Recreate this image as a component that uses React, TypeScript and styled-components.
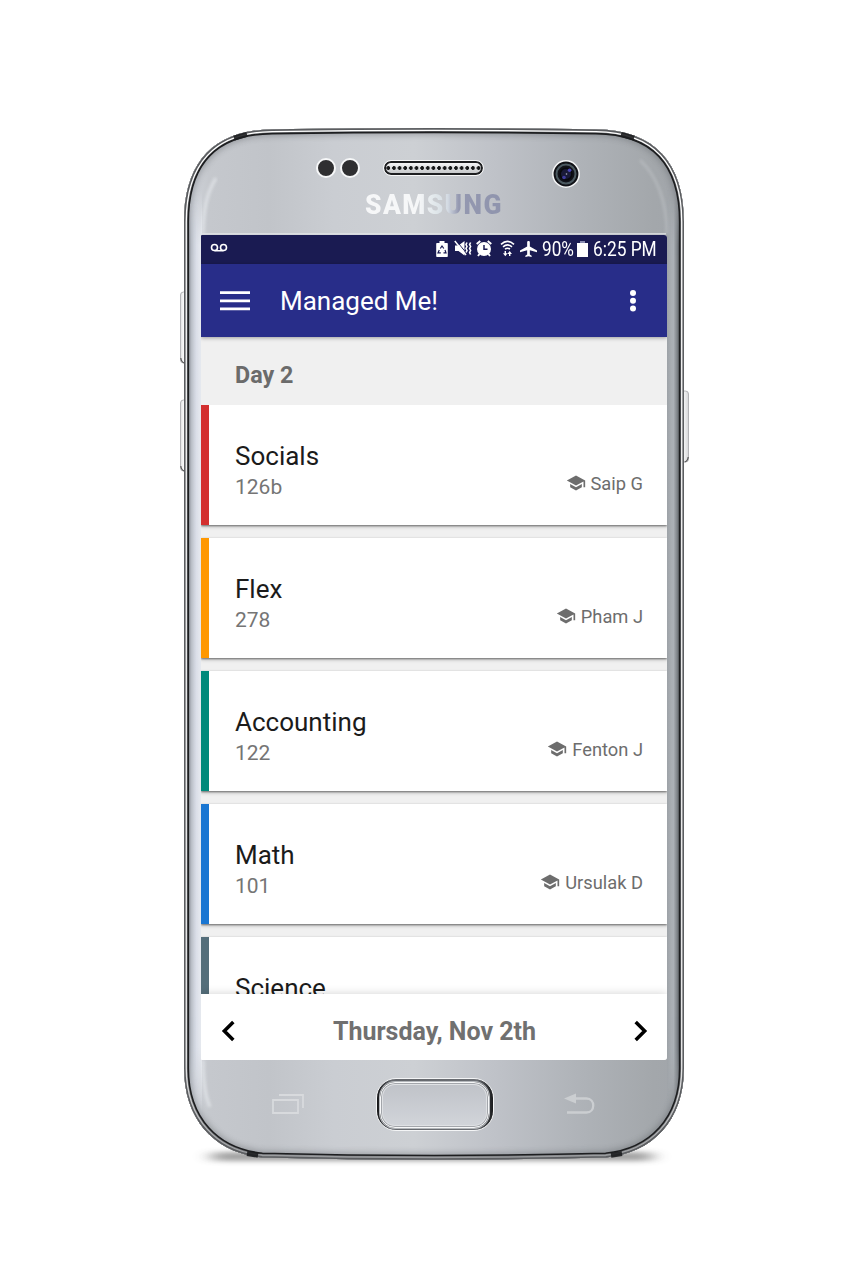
import React from "react";
import styled, { createGlobalStyle } from "styled-components";

const GlobalStyle = createGlobalStyle`
  * { box-sizing: border-box; }
  body { margin: 0; background: #fff; font-family: Roboto, "Liberation Sans", sans-serif; }
`;

const Page = styled.main`
  width: 863px;
  height: 1280px;
  padding: 128px 0 0 184px;
  overflow: hidden;
  background: #fff;
`;

const Phone = styled.div`
  position: relative;
  width: 500px;
  height: 1033px;
  display: flex;
  flex-direction: column;
`;

const ShellArt = styled.svg`
  position: absolute;
  left: -14px;
  top: -8px;
  z-index: 0;
`;

const TopBezel = styled.header`
  position: relative;
  height: 107px;
  padding-top: 30px;
  display: flex;
  flex-direction: column;
`;

const SensorRow = styled.div`
  height: 32px;
  display: flex;
  align-items: flex-start;
  padding-left: 132px;
`;

const Sensor = styled.i`
  width: 20px;
  height: 20px;
  margin: 0 4px 0 0;
  border-radius: 50%;
  border: 2px solid #f6f7f8;
  background: #2f2f31;
`;

const Speaker = styled.div`
  width: 99px;
  height: 14px;
  margin: 3px 0 0 20px;
  border-radius: 8px;
  border: 2px solid #1d1e20;
  outline: 1px solid rgba(255, 255, 255, 0.85);
  background:
    radial-gradient(circle at 3px 5px, #151617 1.6px, transparent 2.1px) 5px 0 / 5.65px 12px repeat-x,
    linear-gradient(#f4f4f5, #c6c8ca);
`;

const Camera = styled.svg`
  margin-left: 68px;
  margin-top: 1px;
`;

const Brand = styled.div`
  width: max-content;
  margin: 0 0 0 181px;
  font-size: 28.5px;
  line-height: 29px;
  font-weight: 900;
  letter-spacing: 1.5px;
  white-space: nowrap;
  transform: scaleX(0.925);
  transform-origin: left;
  color: transparent;
  background: linear-gradient(90deg, #f6f7f8 0 38%, #dfe6ea 52%, #d4dbe3 60%, #9498b0 68%, #8f94ad 100%);
  background-clip: text;
  -webkit-background-clip: text;
`;

const Screen = styled.section`
  position: relative;
  width: 466px;
  height: 825px;
  margin-left: 17px;
  display: flex;
  flex-direction: column;
  background: #f0f0f0;
  overflow: hidden;
  border-radius: 1px 3px 3px 1px;
`;

const StatusBar = styled.div`
  height: 29px;
  flex: none;
  display: flex;
  align-items: center;
  padding: 0 11px 0 9px;
  background: #1a1b52;
  color: #fff;
`;

const StatusIcons = styled.div`
  margin-left: auto;
  display: flex;
  align-items: center;
`;

const StatusText = styled.span<{ $w: number; $scale: number }>`
  width: ${(p) => p.$w}px;
  font-size: 20px;
  line-height: 28px;
  padding-bottom: 1px;
  white-space: nowrap;
  transform: scaleX(${(p) => p.$scale});
  transform-origin: left;
`;

const Glyph = styled.svg<{ $gap?: number }>`
  flex: none;
  display: block;
  margin-right: ${(p) => p.$gap ?? 0}px;
  margin-bottom: 2px;
`;

const Voicemail = styled(Glyph)`
  margin-bottom: 3px;
`;

const AppBar = styled.div`
  position: relative;
  z-index: 1;
  height: 73px;
  flex: none;
  display: flex;
  align-items: center;
  padding: 0 27px 0 19px;
  background: #282d89;
  box-shadow: 0 1px 4px rgba(0, 0, 0, 0.35);
  color: #fff;
`;

const AppTitle = styled.h1`
  flex: 1;
  margin: 0 0 0 30px;
  font-size: 26px;
  line-height: 32px;
  font-weight: 400;
`;

const DayHeading = styled.h2`
  height: 68px;
  flex: none;
  margin: 0;
  padding: 5px 0 0 34px;
  font-size: 23.3px;
  line-height: 66px;
  font-weight: 700;
  color: #6b6b6b;
`;

const ClassList = styled.div`
  flex: 1;
  min-height: 0;
  overflow: hidden;
  display: flex;
  flex-direction: column;
  gap: 13px;
`;

const ClassCard = styled.article<{ $accent: string }>`
  height: 120px;
  flex: none;
  display: flex;
  justify-content: space-between;
  padding: 36px 24px 0 26px;
  background: #fff;
  border-left: 8px solid ${(p) => p.$accent};
  box-shadow: 0 1px 2px rgba(0, 0, 0, 0.5), 0 2px 4px rgba(0, 0, 0, 0.15);
`;

const Subject = styled.h3`
  margin: 0;
  font-size: 26px;
  line-height: 31px;
  font-weight: 400;
  color: #1b1b1b;
`;

const Room = styled.p`
  margin: 1px 0 0;
  font-size: 21px;
  line-height: 28px;
  color: #757575;
`;

const Teacher = styled.div`
  display: flex;
  align-items: center;
  gap: 5px;
  height: 24px;
  margin-top: 30px;
  font-size: 18.3px;
  color: #6d6d6d;
`;

const CapGlyph = styled.svg`
  flex: none;
`;

const DateBar = styled.nav`
  position: relative;
  height: 66px;
  flex: none;
  display: flex;
  align-items: center;
  justify-content: space-between;
  padding: 8px 18px 0 19px;
  background: #fff;
  box-shadow: 0 0 9px rgba(0, 0, 0, 0.18);
`;

const DateLabel = styled.strong`
  padding-top: 2px;
  font-size: 25px;
  line-height: 32px;
  font-weight: 700;
  color: #707070;
`;

const BottomBezel = styled.footer`
  position: relative;
  height: 100px;
  display: flex;
  align-items: flex-start;
  padding: 18px 88px 0 88px;
  justify-content: space-between;
`;

const NavKey = styled.svg`
  margin-top: 15px;
`;

const HomeButton = styled.div`
  width: 118px;
  height: 53px;
  padding: 2.5px 3.5px;
  border-radius: 20px;
  background: linear-gradient(90deg, #151618, #65686d 12%, #6b6e73 86%, #1b1c1e);
  border: 1.5px solid #f4f5f6;
`;

const HomeInner = styled.div`
  height: 100%;
  border-radius: 15px;
  border: 1.5px solid #f6f7f8;
  box-shadow: 0 0 0 1px #b4b7bb, inset 0 0 0 1px #a3a6ab, inset 0 0 0 2px #dfe1e4;
  background: linear-gradient(#bfc2c8, #d2d5da);
`;

const classes = [
  { subject: "Socials", room: "126b", teacher: "Saip G", accent: "#d32f2f" },
  { subject: "Flex", room: "278", teacher: "Pham J", accent: "#ff9800" },
  { subject: "Accounting", room: "122", teacher: "Fenton J", accent: "#00897b" },
  { subject: "Math", room: "101", teacher: "Ursulak D", accent: "#1976d2" },
  { subject: "Science", room: "", teacher: "", accent: "#546e7a" },
];

const outline =
  "M184 222C184 163 213 130 272 129.3Q434 126.8 596 129.3C655 130 684 163 684 222V1068C684 1121 652 1153 606 1157.5Q434 1162 262 1157.5C216 1153 184 1121 184 1068Z";

function Shell() {
  return (
    <ShellArt width="530" height="1060" viewBox="170 120 530 1060" aria-hidden="true">
      <defs>
        <linearGradient id="face" x1="184" x2="684" y1="0" y2="0" gradientUnits="userSpaceOnUse">
          <stop offset="0" stopColor="#d4d8df" />
          <stop offset=".05" stopColor="#c5c8cd" />
          <stop offset=".17" stopColor="#c1c4c9" />
          <stop offset=".3" stopColor="#cacdd2" />
          <stop offset=".46" stopColor="#cdd0d4" />
          <stop offset=".62" stopColor="#bfc2c8" />
          <stop offset=".8" stopColor="#aeb2b7" />
          <stop offset=".94" stopColor="#a3a7ab" />
          <stop offset="1" stopColor="#a1a5aa" />
        </linearGradient>
        <linearGradient id="left" x1="188" x2="202" y1="0" y2="0" gradientUnits="userSpaceOnUse">
          <stop offset="0" stopColor="#a9adb5" />
          <stop offset=".25" stopColor="#ccd1da" />
          <stop offset=".6" stopColor="#dce0e9" />
          <stop offset="1" stopColor="#e8ebf0" />
        </linearGradient>
        <linearGradient id="right" x1="667" x2="680" y1="0" y2="0" gradientUnits="userSpaceOnUse">
          <stop offset="0" stopColor="#9da2a7" />
          <stop offset=".5" stopColor="#b0b5ba" />
          <stop offset=".8" stopColor="#878c91" />
          <stop offset="1" stopColor="#45484c" />
        </linearGradient>
        <linearGradient id="key" x1="0" x2="1" y1="0" y2="0">
          <stop offset="0" stopColor="#dcdddf" />
          <stop offset=".35" stopColor="#fafafa" />
          <stop offset="1" stopColor="#d5d6d8" />
        </linearGradient>
        <linearGradient id="shine" x1="0" x2="0" y1="128" y2="1160" gradientUnits="userSpaceOnUse">
          <stop offset="0" stopColor="#fff" />
          <stop offset=".9" stopColor="#f0f0f0" />
          <stop offset="1" stopColor="#97999c" />
        </linearGradient>
        <filter id="soft" x="-10%" y="-10%" width="120%" height="120%">
          <feGaussianBlur stdDeviation="3" />
        </filter>
        <filter id="fine">
          <feGaussianBlur stdDeviation="1.8" />
        </filter>
        <filter id="ground" x="-10%" y="-200%" width="120%" height="500%">
          <feGaussianBlur stdDeviation="9 2.4" />
        </filter>
        <linearGradient id="fadeSides" x1="0" x2="0" y1="190" y2="1120" gradientUnits="userSpaceOnUse">
          <stop offset="0" stopColor="#fff" stopOpacity="0" />
          <stop offset=".06" stopColor="#fff" />
          <stop offset=".92" stopColor="#fff" />
          <stop offset="1" stopColor="#fff" stopOpacity="0" />
        </linearGradient>
        <mask id="sides" maskUnits="userSpaceOnUse" x="170" y="120" width="530" height="1060">
          <rect x="170" y="120" width="530" height="1060" fill="url(#fadeSides)" />
        </mask>
        <clipPath id="body">
          <path d={outline} />
        </clipPath>
      </defs>
      <rect x="212" y="1152" width="440" height="9" rx="4" fill="#444" opacity=".5" filter="url(#ground)" />
      <g fill="url(#key)" stroke="#a4a5a8" strokeWidth=".8">
        <rect x="180.5" y="292" width="8" height="71" rx="3" />
        <rect x="180.5" y="400" width="8" height="71" rx="3" />
        <rect x="680" y="391" width="8.5" height="71" rx="3" />
      </g>
      <path d="M180.8 358q.5 4 3.500 5M180.800 466q.5 4 3.500 5M688.200 457q-.5 4-3.500 5" fill="none" stroke="#555" strokeWidth="1.200" />
      <path d={outline} fill="url(#face)" />
      <g clipPath="url(#body)">
        <g mask="url(#sides)">
          <rect x="188" y="170" width="14" height="960" fill="url(#left)" />
          <rect x="667" y="170" width="14" height="960" fill="url(#right)" />
        </g>
        <path d={outline} fill="none" stroke="#54585d" strokeWidth="13" opacity=".42" filter="url(#soft)" />
        <path d="M203 234C203 210 207 192 216 178M203 1060C203 1082 205 1096 210 1107" fill="none" stroke="#e9ecf0" strokeWidth="3.500" opacity=".6" filter="url(#fine)" />
        <path d="M667 234C667 202 657 176 640 160" fill="none" stroke="#d0d4d7" strokeWidth="3" opacity=".35" filter="url(#fine)" />
        <path d={outline} fill="none" stroke="#1d1e20" strokeWidth="10.200" />
        <path d={outline} fill="none" stroke="#77797c" strokeWidth="7" />
        <path d={outline} fill="none" stroke="url(#shine)" strokeWidth="5.800" />
        <path d={outline} fill="none" stroke="#5b5d60" strokeWidth="3.200" />
      </g>
      <path d="M234 138.200L247 134.300M621 134.300L634 138.200M247 1153.500L258 1155.200M611 1155.200L622 1153.500" stroke="#1c1d1f" strokeWidth="5" fill="none" opacity=".9" />
      <path d="M202 233.800H666" stroke="#e2e4e7" strokeWidth="1.300" />
    </ShellArt>
  );
}

function CapIcon() {
  return (
    <CapGlyph width="20" height="20" viewBox="0 0 24 24" fill="#6d6d6d">
      <path d="M5 13.18v4L12 21l7-3.82v-4L12 17l-7-3.82zM12 3L1 9l11 6 9-4.91V17h2V9L12 3z" />
    </CapGlyph>
  );
}

export default function App() {
  return (
    <Page>
      <GlobalStyle />
      <Phone>
        <Shell />
        <TopBezel>
          <SensorRow>
            <Sensor />
            <Sensor />
            <Speaker />
            <Camera width="30" height="30" viewBox="0 0 30 30">
              <circle cx="15" cy="15" r="13.2" fill="#111217" stroke="#f5f6f7" strokeWidth="1.500" />
              <circle cx="15" cy="15" r="9.500" fill="#111219" stroke="#4b5960" strokeWidth="2" />
              <circle cx="15" cy="15" r="5.800" fill="#191a38" stroke="#08090c" strokeWidth="1.500" />
              <circle cx="18.600" cy="11.300" r="1.800" fill="#4a46b8" />
              <circle cx="13" cy="18.500" r="1.800" fill="#3d3a9c" />
              <circle cx="15.500" cy="15" r=".8" fill="#b4b6c4" />
            </Camera>
          </SensorRow>
          <Brand>SAMSUNG</Brand>
        </TopBezel>

        <Screen>
          <StatusBar>
            <Voicemail width="18" height="10" viewBox="0 0 18 10" fill="none" stroke="#fff" strokeWidth="1.600">
              <circle cx="4.500" cy="4.500" r="3" />
              <circle cx="13.500" cy="4.500" r="3" />
              <path d="M4.500 7.700h9" />
            </Voicemail>
            <StatusIcons>
              <Glyph $gap={6} width="12" height="16" viewBox="0 0 12 16">
                <path d="M1 2h2.500V0h5v2H11q.8 0 .8.8v12.400q0 .8-.8.8H1q-.8 0-.8-.8V2.800Q.2 2 1 2z" fill="#fff" />
                <path d="M4.300 7.500L6 5l1.800 2.500M9 9l1 2.800H7.500M4.800 11.800H2L3.300 9" fill="none" stroke="#1a1b52" strokeWidth="1.200" />
              </Glyph>
              <Glyph $gap={4} width="18" height="17" viewBox="0 0 18 17">
                <path d="M1 5.500h3.500L10.500 1v14.500l-6-4.500H1z" fill="#fff" />
                <path d="M2 .4L13 13.900" stroke="#1a1b52" strokeWidth="1" />
                <path d="M.8 1L12 15" stroke="#fff" strokeWidth="1.500" />
                <path d="M13 2.500l-1 2 1 2-1 2 1 2-1 2M16.600 2.500l-1 2 1 2-1 2 1 2-1 2 1 2" fill="none" stroke="#fff" strokeWidth="1.600" />
              </Glyph>
              <Glyph $gap={8} width="16" height="17" viewBox="0 0 16 17">
                <circle cx="8" cy="9" r="7" fill="#fff" />
                <path d="M.7 4L4.300 1M15.300 4L11.700 1M3.500 14L2 16M12.500 14l1.500 2" stroke="#fff" strokeWidth="1.900" />
                <path d="M8 5v4.300h3.500" fill="none" stroke="#1a1b52" strokeWidth="1.500" />
              </Glyph>
              <Glyph $gap={5} width="15" height="17" viewBox="0 0 15 17" fill="none" stroke="#fff" strokeWidth="1.600">
                <path d="M1 4.300Q7.500-1.500 14 4.300M3 6.800q4.500-3.700 9 0M5 9.200q2.500-1.900 5 0" />
                <path d="M5.300 11v3M9.700 16v-3" strokeWidth="1.400" />
                <path d="M3 13.300h4.600l-2.300 3zM7.400 14l2.300-3 2.300 3z" fill="#fff" stroke="none" />
              </Glyph>
              <Glyph $gap={5} width="17" height="16" viewBox="2 2 19 20" fill="#fff" preserveAspectRatio="none">
                <path d="M21 16v-2l-8-5V3.500c0-.83-.67-1.500-1.500-1.500S10 2.670 10 3.500V9l-8 5v2l8-2.500V19l-2 1.500V22l3.500-1 3.500 1v-1.500L13 19v-5.500l8 2.500z" />
              </Glyph>
              <StatusText $w={35} $scale={0.86}>90%</StatusText>
              <Glyph $gap={5} width="11" height="16" viewBox="0 0 11 16">
                <path d="M3 0h5v2H3z" fill="#888bb1" />
                <path d="M0 2h11v14H0z" fill="#fff" />
              </Glyph>
              <StatusText $w={63} $scale={0.865}>6:25 PM</StatusText>
            </StatusIcons>
          </StatusBar>

          <AppBar>
            <svg width="30" height="20" viewBox="0 0 30 20" fill="#fff">
              <path d="M0 .3h30v2.700H0zM0 8.500h30v2.700H0zM0 16.500h30v2.700H0z" />
            </svg>
            <AppTitle>Managed Me!</AppTitle>
            <svg width="14" height="22" viewBox="0 0 14 22" fill="#fff">
              <circle cx="7" cy="3" r="3" />
              <circle cx="7" cy="10.800" r="3" />
              <circle cx="7" cy="18.600" r="3" />
            </svg>
          </AppBar>

          <DayHeading>Day 2</DayHeading>
          <ClassList>
            {classes.map((c) => (
              <ClassCard key={c.subject} $accent={c.accent}>
                <div>
                  <Subject>{c.subject}</Subject>
                  <Room>{c.room}</Room>
                </div>
                {c.teacher && (
                  <Teacher>
                    <CapIcon />
                    {c.teacher}
                  </Teacher>
                )}
              </ClassCard>
            ))}
          </ClassList>

          <DateBar>
            <svg width="16" height="22" viewBox="0 0 16 22" fill="none" stroke="#000" strokeWidth="3.500">
              <path d="M13.300 2L4.300 11l9 9" />
            </svg>
            <DateLabel>Thursday, Nov 2th</DateLabel>
            <svg width="16" height="22" viewBox="0 0 16 22" fill="none" stroke="#000" strokeWidth="3.500">
              <path d="M2.700 2l9 9-9 9" />
            </svg>
          </DateBar>
        </Screen>

        <BottomBezel>
          <NavKey width="33" height="22" viewBox="0 0 33 22" fill="none" stroke="#d8dadd" strokeWidth="1.800">
            <path d="M1 7h25v13H1zM7 2h24v13" />
          </NavKey>
          <HomeButton>
            <HomeInner />
          </HomeButton>
          <NavKey width="32" height="22" viewBox="0 0 32 22" fill="none" stroke="#cbced1" strokeWidth="2.300">
            <path d="M11 5.500h11.500c9 0 9 14 0 14H3" />
            <path d="M0 5.500L12 .5v10z" fill="#cbced1" stroke="none" />
          </NavKey>
        </BottomBezel>
      </Phone>
    </Page>
  );
}
